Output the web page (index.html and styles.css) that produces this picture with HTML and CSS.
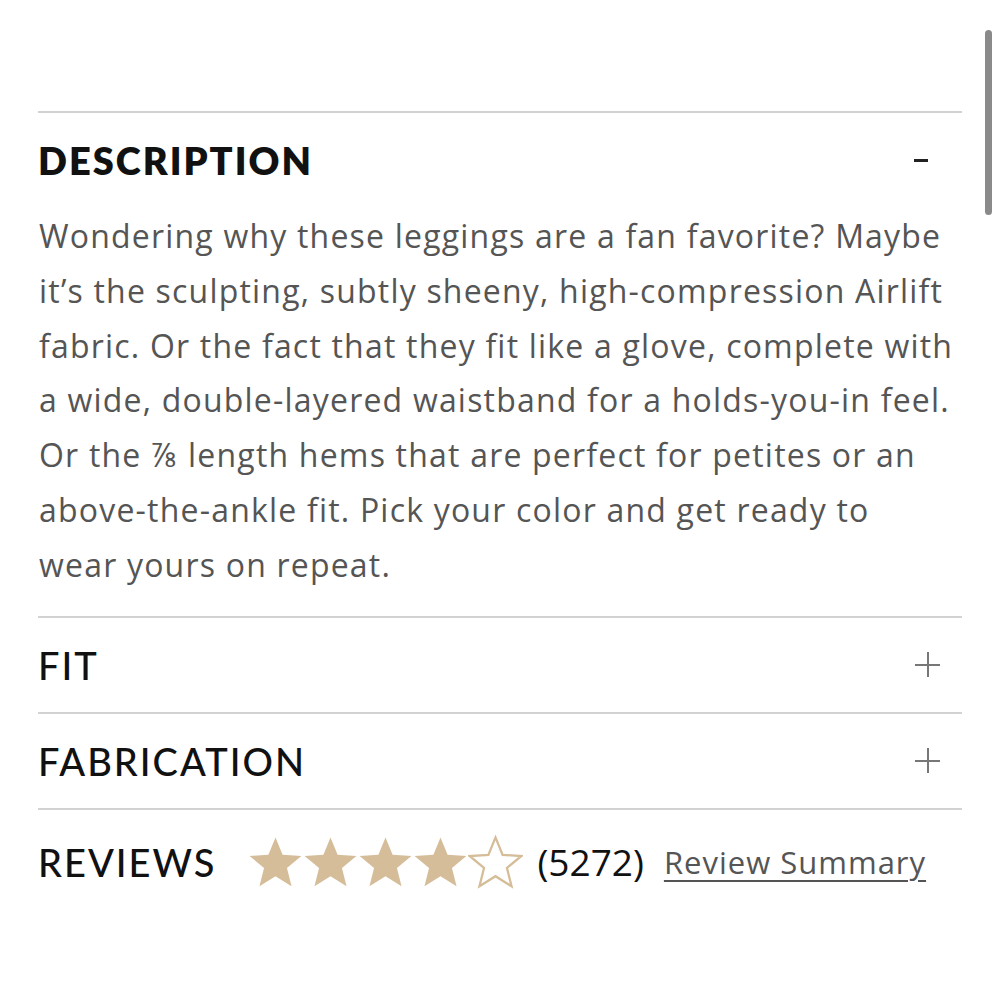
FILE: index.html
```html
<!DOCTYPE html>
<html lang="en">
<head>
    <meta charset="UTF-8">
    <meta name="viewport" content="width=device-width, initial-scale=1.0">
    <title>Product Details</title>
    <link rel="stylesheet" href="styles.css">
</head>
<body>

<div class="scrollbar"></div>

<div class="accordion">
    <div class="item open">
        <div class="item-head">
            <h3 class="title title-bold">DESCRIPTION</h3>
            <span class="minus"></span>
        </div>
        <p class="item-body">Wondering why these leggings are a fan favorite? Maybe it’s the sculpting, subtly sheeny, high-compression Airlift fabric. Or the fact that they fit like a glove, complete with a wide, double-layered waistband for a holds-you-in feel. Or the ⅞ length hems that are perfect for petites or an above-the-ankle fit. Pick your color and get ready to wear&nbsp;yours on repeat.</p>
    </div>
    <div class="item">
        <div class="item-head">
            <h3 class="title">FIT</h3>
            <span class="plus"></span>
        </div>
    </div>
    <div class="item">
        <div class="item-head">
            <h3 class="title">FABRICATION</h3>
            <span class="plus"></span>
        </div>
    </div>
    <div class="item reviews">
        <h3 class="title">REVIEWS</h3>
        <div class="stars">
            <svg viewBox="0 0 24 24"><path class="full" d="M12 1.5l3.1 7.6 8.2.5-6.3 5.2 2 8-7-4.4-7 4.4 2-8L.7 9.6l8.2-.5z"/></svg>
            <svg viewBox="0 0 24 24"><path class="full" d="M12 1.5l3.1 7.6 8.2.5-6.3 5.2 2 8-7-4.4-7 4.4 2-8L.7 9.6l8.2-.5z"/></svg>
            <svg viewBox="0 0 24 24"><path class="full" d="M12 1.5l3.1 7.6 8.2.5-6.3 5.2 2 8-7-4.4-7 4.4 2-8L.7 9.6l8.2-.5z"/></svg>
            <svg viewBox="0 0 24 24"><path class="full" d="M12 1.5l3.1 7.6 8.2.5-6.3 5.2 2 8-7-4.4-7 4.4 2-8L.7 9.6l8.2-.5z"/></svg>
            <svg viewBox="0 0 24 24"><path class="empty" d="M12 1.5l3.1 7.6 8.2.5-6.3 5.2 2 8-7-4.4-7 4.4 2-8L.7 9.6l8.2-.5z"/></svg>
        </div>
        <span class="count">(5272)</span>
        <a href="#" class="summary">Review Summary</a>
    </div>
</div>

</body>
</html>
```

FILE: styles.css
```css
body {
    font-family: "Lato", "Noto Sans", sans-serif;
    margin: 0;
    background: #fff;
    color: #111;
}
.scrollbar {
    position: fixed;
    top: 30px;
    right: 8px;
    width: 7px;
    height: 185px;
    border-radius: 4px;
    background: #8a8a8a;
}
.accordion {
    margin: 111px 38px 0 38px;
}
.item {
    border-top: 2px solid #d2d2d2;
}
.item-head {
    display: flex;
    justify-content: space-between;
    align-items: center;
    height: 94px;
    padding-right: 22px;
}
.title {
    margin: 0;
    font-size: 38px;
    font-weight: 500;
    letter-spacing: 2px;
    color: #111;
}
.title-bold {
    font-weight: 800;
    letter-spacing: 2px;
}
.item-body {
    margin: 0;
    padding: 2px 0 23px 1px;
    font-family: "Open Sans", "Noto Sans", sans-serif;
    font-size: 32px;
    line-height: 54.8px;
    letter-spacing: 1.2px;
    color: #555;
}
.minus {
    width: 14px;
    height: 3px;
    margin-right: 12px;
    background: #222;
}
.plus {
    position: relative;
    width: 25px;
    height: 25px;
}
.plus::before, .plus::after {
    content: "";
    position: absolute;
    background: #777;
}
.plus::before {
    left: 0;
    right: 0;
    top: 11.5px;
    height: 2px;
}
.plus::after {
    top: 0;
    bottom: 0;
    left: 11.5px;
    width: 2px;
}
.reviews {
    display: flex;
    align-items: center;
    height: 104px;
}
.stars {
    display: flex;
    margin-left: 32px;
    margin-right: 14px;
}
.stars svg {
    width: 55px;
    height: 55px;
}
.full {
    fill: #d5bd99;
}
.empty {
    fill: #fff;
    stroke: #d5bd99;
    stroke-width: 1;
}
.count {
    font-family: "Open Sans", "Noto Sans", sans-serif;
    font-size: 37px;
    color: #111;
}
.summary {
    margin-left: 20px;
    font-family: "Open Sans", "Noto Sans", sans-serif;
    font-size: 31px;
    letter-spacing: 1px;
    color: #555;
    text-decoration: underline;
    text-underline-offset: 6px;
    text-decoration-thickness: 2px;
}
```
